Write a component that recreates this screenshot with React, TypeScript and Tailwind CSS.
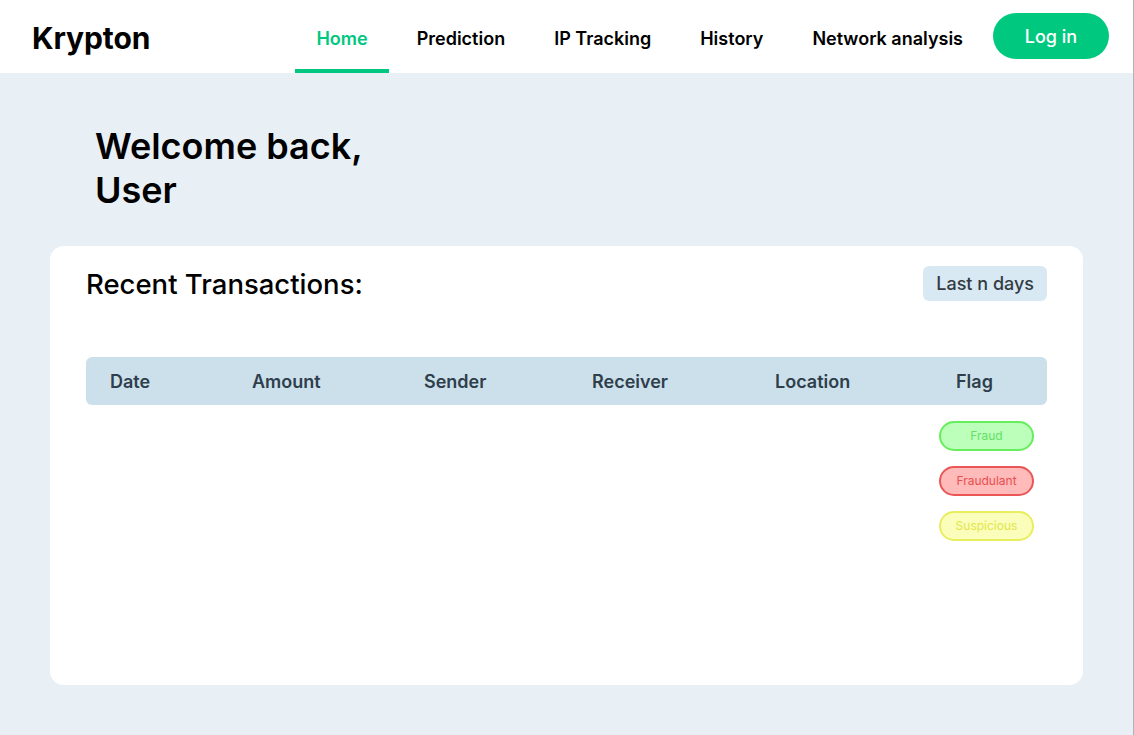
import React from 'react';

const navItems = ['Home', 'Prediction', 'IP Tracking', 'History', 'Network analysis'];

const columns = [
  { label: 'Date', cls: 'pl-[24px]' },
  { label: 'Amount', cls: '' },
  { label: 'Sender', cls: '' },
  { label: 'Receiver', cls: '' },
  { label: 'Location', cls: '' },
  { label: 'Flag', cls: 'pl-[17px]' },
];

const flags = [
  { label: 'Fraud', cls: 'bg-[#bbffbb] border-[#66ee5c] text-[#63e063]' },
  { label: 'Fraudulant', cls: 'bg-[#ffbaba] border-[#ea5656] text-[#e84f4f]' },
  { label: 'Suspicious', cls: 'bg-[#fbfdbb] border-[#e9ee5f] text-[#e2e64a]' },
];

const App = () => {
  return (
    <div className="min-h-[735px] bg-[#e8f0f6] border-r border-[#adb4ba] font-['Inter','Noto_Sans',sans-serif]">
      {/* Top bar */}
      <header className="h-[73px] bg-white flex items-center pl-[32px] pr-[24px]">
        <div className="text-[30px] font-bold text-black tracking-[-0.1px] pt-[3px]">Krypton</div>
        <nav className="ml-auto flex items-stretch h-full gap-[7px]">
          {navItems.map((item, i) => (
            <a
              key={item}
              className={
                i === 0
                  ? 'px-[21px] flex items-center text-[18px] font-semibold text-[#00c77f] border-b-4 border-[#00c77f] pt-[8px]'
                  : 'px-[21px] flex items-center text-[18px] font-semibold text-black border-b-4 border-transparent pt-[8px]'
              }
            >
              {item}
            </a>
          ))}
        </nav>
        <button className="ml-[9px] w-[116px] h-[46px] rounded-full bg-[#00c97f] text-white text-[18px] font-medium mb-[1px]">
          Log in
        </button>
      </header>

      <main className="px-[50px] pb-[50px]">
        <h1 className="pl-[45px] pt-[51px] text-[36px] leading-[44px] font-semibold text-black">
          Welcome back,
          <br />
          User
        </h1>

        <section className="mt-[34px] bg-white rounded-[14px] h-[439px] px-[36px] pt-[20px]">
          <div className="flex items-center justify-between h-[35px]">
            <h2 className="text-[27.5px] font-medium text-black pt-[3px]">Recent Transactions:</h2>
            <button className="h-[35px] px-[13px] rounded-[6px] bg-[#d8e9f3] text-[18px] font-medium text-[#333a42]">
              Last n days
            </button>
          </div>

          <div className="mt-[56px] h-[48px] rounded-[6px] bg-[#cbe0ea] grid grid-cols-[166px_172px_168px_183px_164px_1fr] items-center">
            {columns.map((c) => (
              <div key={c.label} className={`text-[18px] font-semibold text-[#2f3e4c] ${c.cls}`}>
                {c.label}
              </div>
            ))}
          </div>

          <div className="mt-[16px] flex flex-col items-end gap-[15px] pr-[13px]">
            {flags.map((f) => (
              <span
                key={f.label}
                className={`w-[95px] h-[30px] rounded-full border-2 flex items-center justify-center text-[12px] ${f.cls}`}
              >
                {f.label}
              </span>
            ))}
          </div>
        </section>
      </main>
    </div>
  );
};

export default App;
